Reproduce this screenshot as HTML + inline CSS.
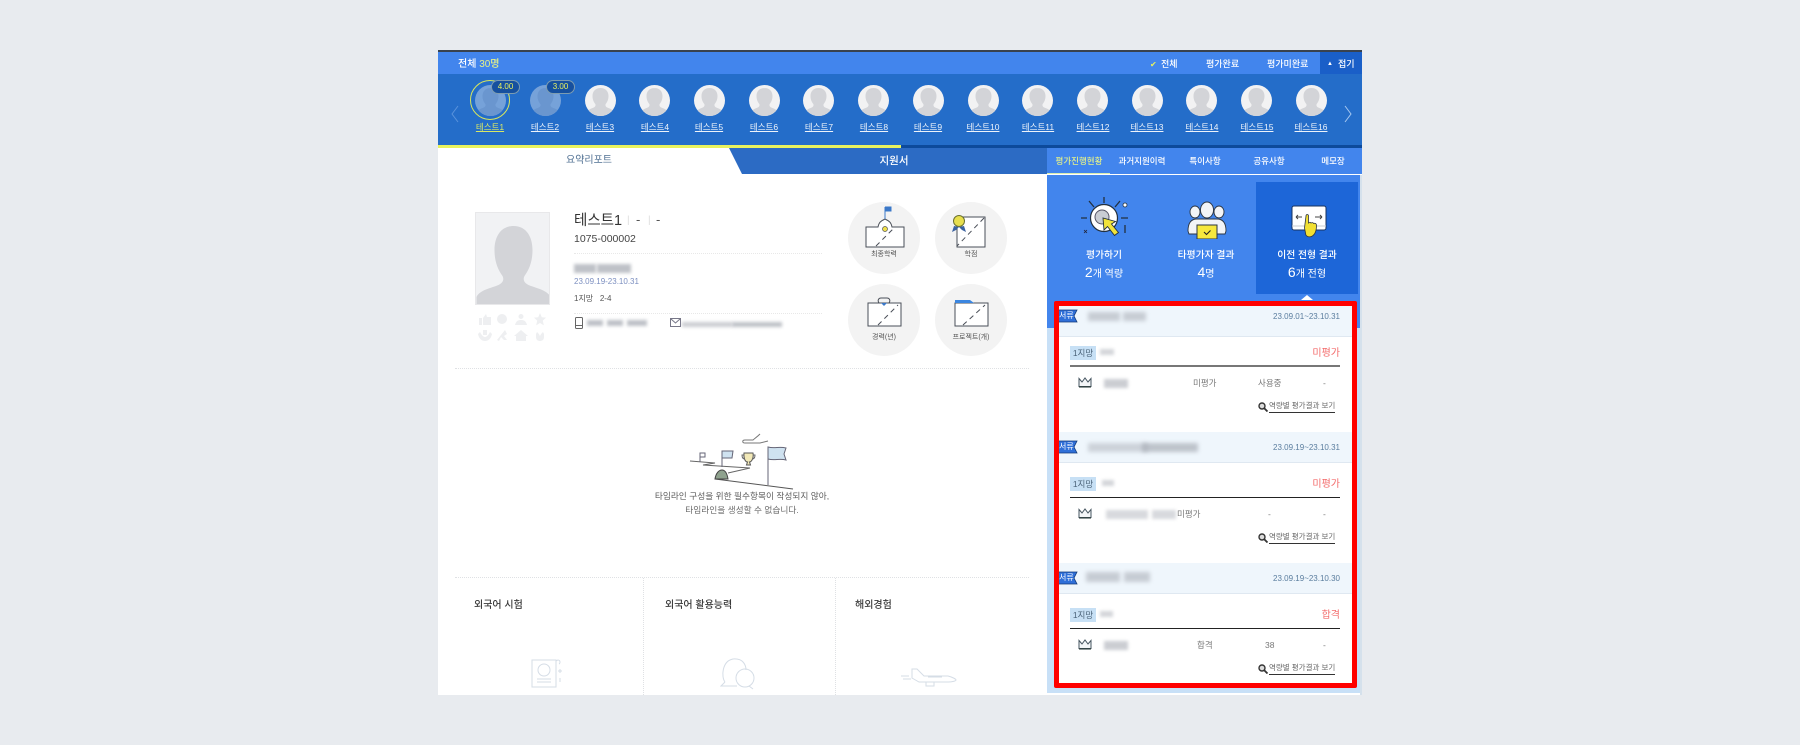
<!DOCTYPE html>
<html lang="ko"><head><meta charset="utf-8"><title>평가</title>
<style>
*{box-sizing:border-box}
html,body{margin:0;padding:0;width:1800px;height:745px;overflow:hidden;background:#e8ebef;font-family:"Liberation Sans","Noto Sans CJK KR",sans-serif;}
.a{position:absolute;white-space:nowrap}
.c{transform:translateX(-50%)}
.av{position:absolute;top:85px;width:31px;height:31px;border-radius:50%;background:#f2f2f3;overflow:hidden}
.av svg{display:block}
.nm{position:absolute;top:120px;width:54px;text-align:center;color:#fff;font-size:8.5px;line-height:14px;text-decoration:underline;opacity:.92}
.tb{position:absolute;top:153px;width:64px;text-align:center;color:#fff;font-size:8.5px;line-height:16px;font-weight:500}
.bl{position:absolute;background:#a9adb5;filter:blur(1.6px);opacity:.75}
.hd{position:absolute;left:1058px;width:295px;height:31px;background:#eff6fc;border-bottom:1px solid #dfe8f1}
.date{position:absolute;left:1240px;width:100px;text-align:right;color:#5a7d9e;font-size:8px;line-height:14px}
.lab{position:absolute;left:1070px;width:26px;height:14px;background:#c7e0f5;color:#4a6278;font-size:8.5px;line-height:14px;text-align:center}
.st{position:absolute;width:60px;left:1280px;text-align:right;font-size:10px;line-height:16px;color:#f36b6b}
.ln{position:absolute;left:1070px;width:270px;height:1px;background:#222}
.t9{position:absolute;font-size:8.5px;line-height:14px;color:#777}
.lk{position:absolute;left:1269px;width:66px;font-size:7.5px;line-height:13px;color:#666;border-bottom:1px solid #333;height:14px;text-align:center;white-space:nowrap}
.circ{position:absolute;width:72px;height:72px;border-radius:50%;background:#f3f3f3}
.cap{position:absolute;width:72px;text-align:center;font-size:7px;line-height:10px;color:#555}
.tt{position:absolute;color:#fff;font-size:9.8px;line-height:16px;text-align:center;width:100px;font-weight:500}
.tn{position:absolute;color:#fff;font-size:10px;line-height:18px;text-align:center;width:100px}
.tn b{font-weight:300;font-size:14px}
.ti{position:absolute;top:598px;color:#3a3a3a;font-size:10px;line-height:16px;font-weight:500}
.bd{position:absolute;left:1059px;color:#fff;font-size:8px;line-height:12px}
</style></head><body>
<svg width="0" height="0" style="position:absolute"><defs>
<symbol id="p" viewBox="0 0 31 31"><path d="M15.500 3c-5.200 0-8 3.500-8 8 0 3.500 1.200 6 2.800 8 .6 1.500 0 2.800-1.600 3.500-3 1.300-5 1.800-6 4L5 31h21l2.300-4.500c-1-2.200-3-2.700-6-4-1.600-.7-2.200-2-1.600-3.500 1.600-2 2.800-4.500 2.800-8 0-4.500-2.800-8-8-8z" fill="#d3d4d8"/></symbol>
<symbol id="cr" viewBox="0 0 14 11"><path d="M1 1.500l3 3.500 3-4 3 4 3-3.500v8H1z" fill="#f4f6f8" stroke="#465560" stroke-width="1"/><path d="M1 9.800h12" stroke="#344" stroke-width="1.500"/></symbol>
<symbol id="mg" viewBox="0 0 10 10"><circle cx="4" cy="4" r="3" fill="#ddd" stroke="#333" stroke-width="1.400"/><path d="M6 6l3.500 3.500" stroke="#333" stroke-width="1.800"/></symbol>
</defs></svg>

<div class="a" style="left:438px;top:50px;width:924px;height:645px;background:#fff;overflow:hidden"></div>
<div class="a" style="left:438px;top:50px;width:924px;height:2px;background:#39424e"></div>
<div class="a" style="left:438px;top:52px;width:924px;height:22px;background:#4285ed"></div>
<div class="a" style="left:438px;top:74px;width:924px;height:71px;background:#246dc9"></div>
<div class="a" style="left:438px;top:145px;width:463px;height:3px;background:#e8f25e"></div>
<div class="a" style="left:901px;top:145px;width:461px;height:3px;background:#0d4a9b"></div>
<div class="a" style="left:1320px;top:52px;width:42px;height:22px;background:#1a5fc8"></div>

<div class="a" style="left:458px;top:58px;color:#fff;font-size:10px;line-height:14px;font-weight:500">전체 <span style="color:#e3f08a">30명</span></div>
<div class="a" style="left:1150px;top:58px;color:#e8f25e;font-size:8px;line-height:13px">✔</div>
<div class="a" style="left:1161px;top:58px;color:#fff;font-size:9px;line-height:13px;font-weight:500">전체</div>
<div class="a" style="left:1206px;top:58px;color:#fff;font-size:9px;line-height:13px;font-weight:500">평가완료</div>
<div class="a" style="left:1267px;top:58px;color:#fff;font-size:9px;line-height:13px;font-weight:500">평가미완료</div>
<div class="a" style="left:1327px;top:58px;color:#fff;font-size:6px;line-height:12px">▲</div>
<div class="a" style="left:1338px;top:58px;color:#fff;font-size:9px;line-height:13px;font-weight:500">접기</div>

<svg class="a" style="left:450px;top:104px" width="10" height="20"><path d="M8 2L2 10l6 8" fill="none" stroke="#5a93dc" stroke-width="1"/></svg>
<svg class="a" style="left:1343px;top:104px" width="10" height="20"><path d="M2 2l6 8-6 8" fill="none" stroke="#a7c8f0" stroke-width="1"/></svg>

<div class="a" style="left:470px;top:80px;width:40px;height:40px;border-radius:50%;border:1.500px solid #d8e65c"></div>
<div class="av" style="left:475px;opacity:.4"><svg width="31" height="31"><use href="#p"/></svg></div>
<div class="av" style="left:530px;opacity:.4"><svg width="31" height="31"><use href="#p"/></svg></div>
<div class="av" style="left:585px"><svg width="31" height="31"><use href="#p"/></svg></div>
<div class="av" style="left:639px"><svg width="31" height="31"><use href="#p"/></svg></div>
<div class="av" style="left:694px"><svg width="31" height="31"><use href="#p"/></svg></div>
<div class="av" style="left:749px"><svg width="31" height="31"><use href="#p"/></svg></div>
<div class="av" style="left:803px"><svg width="31" height="31"><use href="#p"/></svg></div>
<div class="av" style="left:858px"><svg width="31" height="31"><use href="#p"/></svg></div>
<div class="av" style="left:913px"><svg width="31" height="31"><use href="#p"/></svg></div>
<div class="av" style="left:968px"><svg width="31" height="31"><use href="#p"/></svg></div>
<div class="av" style="left:1022px"><svg width="31" height="31"><use href="#p"/></svg></div>
<div class="av" style="left:1077px"><svg width="31" height="31"><use href="#p"/></svg></div>
<div class="av" style="left:1132px"><svg width="31" height="31"><use href="#p"/></svg></div>
<div class="av" style="left:1186px"><svg width="31" height="31"><use href="#p"/></svg></div>
<div class="av" style="left:1241px"><svg width="31" height="31"><use href="#p"/></svg></div>
<div class="av" style="left:1296px"><svg width="31" height="31"><use href="#p"/></svg></div>

<div class="a" style="left:491px;top:80px;width:29px;height:14px;border-radius:7px;background:#16509f;border:1px solid #7d9cb0;color:#e8f25e;font-size:8px;line-height:12px;text-align:center">4.00</div>
<div class="a" style="left:546px;top:80px;width:29px;height:14px;border-radius:7px;background:#16509f;border:1px solid #7d9cb0;color:#e8f25e;font-size:8px;line-height:12px;text-align:center">3.00</div>

<div class="nm" style="left:463px;color:#e8f25e">테스트1</div><div class="nm" style="left:518px">테스트2</div><div class="nm" style="left:573px">테스트3</div><div class="nm" style="left:628px">테스트4</div><div class="nm" style="left:682px">테스트5</div><div class="nm" style="left:737px">테스트6</div><div class="nm" style="left:792px">테스트7</div><div class="nm" style="left:847px">테스트8</div><div class="nm" style="left:901px">테스트9</div><div class="nm" style="left:956px">테스트10</div><div class="nm" style="left:1011px">테스트11</div><div class="nm" style="left:1066px">테스트12</div><div class="nm" style="left:1120px">테스트13</div><div class="nm" style="left:1175px">테스트14</div><div class="nm" style="left:1230px">테스트15</div><div class="nm" style="left:1284px">테스트16</div>

<svg class="a" style="left:729px;top:148px" width="318" height="26"><path d="M0 0H318V26H13z" fill="#2c6bc4"/></svg>
<div class="a c" style="left:589px;top:153px;color:#4f6f92;font-size:10px;line-height:16px">요약리포트</div>
<div class="a c" style="left:894px;top:153px;color:#fff;font-size:10.500px;line-height:16px;font-weight:500">지원서</div>

<div class="a" style="left:1047px;top:148px;width:315px;height:26px;background:#4285ed"></div>
<div class="tb" style="left:1047px;color:#e3f08a">평가진행현황</div><div class="tb" style="left:1110px">과거지원이력</div><div class="tb" style="left:1173px">특이사항</div><div class="tb" style="left:1237px">공유사항</div><div class="tb" style="left:1301px">메모장</div>
<div class="a" style="left:1047px;top:174px;width:315px;height:1px;background:#fff"></div>
<div class="a" style="left:1047px;top:173px;width:63px;height:1px;background:#d8ecb0"></div>

<div class="a" style="left:1047px;top:175px;width:313px;height:153px;background:#4285ed"></div>
<div class="a" style="left:1047px;top:328px;width:313px;height:365px;background:#c8e0f7"></div>
<div class="a" style="left:1360px;top:175px;width:2px;height:520px;background:#d5e1ec"></div>
<div class="a" style="left:1256px;top:182px;width:102px;height:112px;background:#1d66d8"></div>
<svg class="a" style="left:1300px;top:294px" width="14" height="7"><path d="M1 6l6-5 6 5z" fill="#fff"/></svg>

<svg class="a" style="left:1079px;top:197px" width="54" height="50" viewBox="0 0 54 50"><g fill="none" stroke="#22303f" stroke-width="1.300"><path d="M25 0v6M10 4l5 6M41 4l-5 6M2 21h6M42 21h7M46 28v8"/></g><circle cx="46" cy="8" r="2" fill="#fff" stroke="#22303f" stroke-width=".8"/><circle cx="25" cy="21" r="13.500" fill="#fff" stroke="#22303f" stroke-width="1.200"/><circle cx="23" cy="20" r="7" fill="#c9cdd3" stroke="#556" stroke-width="1"/><path d="M24 21l1 12 3.500-3.500 7 9 4-3-7-8.500 4-2.500z" fill="#f1e33b" stroke="#23303d" stroke-width=".9"/><path d="M5 33l3 3m0-3l-3 3" stroke="#223" stroke-width=".8"/></svg>
<svg class="a" style="left:1186px;top:201px" width="42" height="38" viewBox="0 0 42 38"><g fill="#f2f4f7" stroke="#2b3542" stroke-width=".9"><ellipse cx="9" cy="11" rx="5" ry="6"/><ellipse cx="33" cy="11" rx="5" ry="6"/><path d="M2 30c0-8 3-12 9-12h20c6 0 9 4 9 12l-1 3H3z"/><ellipse cx="21" cy="9" rx="6.500" ry="8"/></g><rect x="11" y="24" width="20" height="14" fill="#f6e83d" stroke="#2b3542"/><path d="M18 31l2.500 2.500 4-4" fill="none" stroke="#222" stroke-width="1.100"/></svg>
<svg class="a" style="left:1291px;top:205px" width="37" height="34" viewBox="0 0 37 34"><rect x="1" y="1" width="34" height="24" rx="2" fill="#fff" stroke="#18335e"/><path d="M1 21h34" stroke="#c8ccd2"/><path d="M5 12h6M5 12l2-2M5 12l2 2M24 12h7M31 12l-2-2M31 12l-2 2" stroke="#444" fill="none"/><path d="M15 11c0-2 2.500-2 2.500 0v7c1-1 2-1 2.500 0 1-.6 2-.6 2.500.4 1.500-.4 3 0 3 2 0 5-1 7-2 8.500-1.500 2-3 3-5 3-3 0-4-1.500-4-4l-1-5z" fill="#f2e032" stroke="#2d3440" stroke-width=".8"/></svg>

<div class="tt" style="left:1054px;top:248px">평가하기</div><div class="tn" style="left:1054px;top:263px"><b>2</b>개 역량</div>
<div class="tt" style="left:1156px;top:248px">타평가자 결과</div><div class="tn" style="left:1156px;top:263px"><b>4</b>명</div>
<div class="tt" style="left:1257px;top:248px">이전 전형 결과</div><div class="tn" style="left:1257px;top:263px"><b>6</b>개 전형</div>

<div class="a" style="left:1058px;top:306px;width:295px;height:378px;background:#fff"></div>

<!-- left profile -->
<div class="a" style="left:475px;top:212px;width:75px;height:93px;background:#f1f2f4;border:1px solid #e8e8ea;overflow:hidden"><svg width="75" height="92" viewBox="0 0 75 92"><path d="M37.500 13c-13 0-19 11-19 24 0 11 3 19 8 26 2 4 0 7-4 9-7 3-19 5-22 12v8h74v-8c-3-7-15-9-22-12-4-2-6-5-4-9 5-7 8-15 8-26 0-13-6-24-19-24z" fill="#d3d4d8"/></svg></div>
<svg class="a" style="left:477px;top:312px" width="70" height="32" viewBox="0 0 70 32"><g fill="#eeeff1"><path d="M2 6h3v7H2zM6 6l3-4 1 3h4v8H6z"/><circle cx="25" cy="7" r="5"/><path d="M44 2a2.500 2.500 0 110 5 2.500 2.500 0 010-5zM38 13c1-4 3-5 6-5s5 1 6 5z"/><path d="M63 1l1.800 4.200 4.200.4-3.200 3 1 4.800-3.800-2.400-3.800 2.400 1-4.800-3.200-3 4.200-.4z"/><path d="M3 20c2 4 4 5 5 5s3-1 5-5l2 2c-1 5-4 7-7 7s-6-2-7-7zM6 18h4v5H6z"/><path d="M20 28l8-10 2 4-3 2 3 4h-3l-3-3-2 4z"/><path d="M44 18l7 6h-2v5H39v-5h-2z"/><path d="M60 20c2 2 2 2 3 4 1-2 1-2 3-4l1 2v3c0 3-2 4-4 4s-4-1-4-4v-3z"/></g></svg>

<div class="a" style="left:574px;top:211px;color:#333;font-size:14.500px;line-height:20px">테스트1</div>
<div class="a" style="left:627px;top:212px;color:#ddd;font-size:10px;line-height:18px">|</div>
<div class="a" style="left:636px;top:211px;color:#555;font-size:13px;line-height:18px">-</div>
<div class="a" style="left:648px;top:212px;color:#ddd;font-size:10px;line-height:18px">|</div>
<div class="a" style="left:656px;top:211px;color:#555;font-size:13px;line-height:18px">-</div>
<div class="a" style="left:574px;top:231px;color:#444;font-size:10.500px;line-height:17px">1075-000002</div>
<div class="a" style="left:574px;top:253px;width:248px;border-top:1px dotted #e8e8e8"></div>
<div class="bl" style="left:574px;top:264px;width:22px;height:9px"></div><div class="bl" style="left:597px;top:264px;width:34px;height:9px"></div>
<div class="a" style="left:574px;top:275px;color:#7c8fc0;font-size:8px;line-height:14px">23.09.19-23.10.31</div>
<div class="a" style="left:574px;top:292px;color:#555;font-size:8px;line-height:13px">1지망&nbsp;&nbsp; 2-4</div>
<div class="a" style="left:574px;top:313px;width:248px;border-top:1px dotted #e8e8e8"></div>
<svg class="a" style="left:575px;top:317px" width="8" height="12"><rect x=".5" y=".5" width="7" height="11" rx="1" fill="none" stroke="#666"/><path d="M1 8.500h6" stroke="#666"/></svg>
<div class="bl" style="left:587px;top:320px;width:16px;height:6px"></div><div class="bl" style="left:607px;top:320px;width:16px;height:6px"></div><div class="bl" style="left:627px;top:320px;width:20px;height:6px"></div>
<svg class="a" style="left:670px;top:318px" width="11" height="9"><rect x=".5" y=".5" width="10" height="8" fill="none" stroke="#778"/><path d="M1 1l4.500 4L10 1" fill="none" stroke="#778"/></svg>
<div class="bl" style="left:682px;top:322px;width:50px;height:5px;opacity:.6"></div><div class="bl" style="left:732px;top:322px;width:50px;height:5px"></div>

<div class="circ" style="left:848px;top:202px"></div><div class="circ" style="left:935px;top:202px"></div><div class="circ" style="left:848px;top:284px"></div><div class="circ" style="left:935px;top:284px"></div>
<svg class="a" style="left:848px;top:202px" width="160" height="155" viewBox="0 0 160 155" fill="none"><g stroke="#4a4f58" stroke-width="1"><path d="M18 25v20h38V25H44c-1-5-3-6-7-8-4 2-6 3-7 8z" fill="#fff"/><path d="M109 15h28v30h-28z" fill="#fff"/><path d="M136 16l-27 28" stroke-dasharray="5 4"/><path d="M28 44l19-19" stroke-dasharray="5 4"/><path d="M20 101h33v23H20z" fill="#fff"/><path d="M31 101c-2-3 0-5 2-5h6c2 0 4 2 2 5"/><path d="M30 123l20-20" stroke-dasharray="5 4"/><path d="M107 101h33v23h-33z" fill="#fff"/><path d="M115 123l22-20" stroke-dasharray="5 4"/></g><path d="M37 17V5m0 0h6v4h-6" fill="#3b78c8" stroke="#3b78c8"/><circle cx="37" cy="27" r="2.500" fill="#f0e04a" stroke="#555" stroke-width=".7"/><path d="M106 24l-2 6 4-2 3-3M116 24l2 6-4-2-3-3" fill="#3b62a0"/><circle cx="111" cy="19" r="5.500" fill="#e8df4e" stroke="#6a7030"/><path d="M107 101v-3h15l4 3z" fill="#3b86e0"/><path d="M33 101l3 3 3-3z" fill="#3b78c8"/></svg>
<div class="cap" style="left:848px;top:250px">최종학력</div><div class="cap" style="left:935px;top:250px">학점</div><div class="cap" style="left:848px;top:333px">경력(년)</div><div class="cap" style="left:935px;top:333px">프로젝트(개)</div>

<div class="a" style="left:455px;top:368px;width:574px;border-top:1px dotted #dfe1e4"></div>

<svg class="a" style="left:688px;top:431px" width="110" height="62" viewBox="0 0 110 62" fill="none"><path d="M2 30l25 2-12 2 47 3" stroke="#666"/><path d="M27 48l78 10" stroke="#555"/><path d="M12 31v-9h5v4h-5" stroke="#667"/><path d="M34 36V20" stroke="#667"/><path d="M34 20h11l-1 7H34z" stroke="#667" fill="#cfe2f0"/><path d="M80 54V16" stroke="#667"/><path d="M80 16c7 2 11-1 18 1l-2 6 2 6c-7-2-11 1-18-1z" stroke="#667" fill="#cfe2f0"/><path d="M56 22h9c1 6-2 9-3.500 9l1 3h-4l1-3c-2 0-4-3-3.500-9z" stroke="#555" fill="#f2e9b8"/><path d="M56 24h-2c0 3 1 4 3 4M65 24h2c0 3-1 4-3 4" stroke="#666"/><path d="M27 48c1-6 4-9 7-9s5 3 6 9z" fill="#8fa28e" stroke="#444"/><path d="M40 42l22-5" stroke="#666"/><path d="M72 3c-3 3-6 5-7 6H57c-3 0-3 3 0 3h15l8-2" stroke="#777"/></svg>
<div class="a c" style="left:742px;top:489px;color:#5c5c5c;font-size:8.700px;line-height:14px;">타임라인 구성을 위한 필수항목이 작성되지 않아,</div>
<div class="a c" style="left:742px;top:503px;color:#6a6a6a;font-size:8.700px;line-height:14px">타임라인을 생성할 수 없습니다.</div>

<div class="a" style="left:455px;top:577px;width:574px;border-top:1px dotted #dfe1e4"></div>
<div class="a" style="left:643px;top:578px;height:117px;border-left:1px dotted #dfe1e4"></div>
<div class="a" style="left:835px;top:578px;height:117px;border-left:1px dotted #dfe1e4"></div>
<div class="ti" style="left:474px">외국어 시험</div><div class="ti" style="left:665px">외국어 활용능력</div><div class="ti" style="left:855px">해외경험</div>
<svg class="a" style="left:530px;top:657px" width="36" height="32" viewBox="0 0 36 32" fill="none" stroke="#d5dde6"><rect x="2" y="3" width="24" height="27"/><circle cx="14" cy="13" r="6"/><path d="M7 22h14M7 25h14M26 4c4-3 5 2 3 3M30 12v4M28 14h4M30 21v4"/></svg>
<svg class="a" style="left:720px;top:657px" width="36" height="34" viewBox="0 0 36 34" fill="none" stroke="#d5dde6"><path d="M5 25C1 20 2 4 13 2c10-1 13 6 13 11"/><circle cx="25" cy="21" r="9"/><path d="M5 25L1 29h16M29 29l4 3"/></svg>
<svg class="a" style="left:900px;top:667px" width="60" height="22" viewBox="0 0 60 22" fill="none" stroke="#d5dde6"><path d="M12 2h5l7 7h24c4 1 8 3 8 4s-4 2-8 2H19l-7-4z"/><path d="M1 9h8M3 12h8M34 15v4h-8v-4M28 10h14"/></svg>

<!-- list -->
<div class="hd" style="top:306px"></div><div class="hd" style="top:432px"></div><div class="hd" style="top:563px"></div>
<div class="a" style="left:1088px;top:312px;width:32px;height:9px;background:#b5bac2;filter:blur(2px);opacity:.7"></div><div class="a" style="left:1123px;top:312px;width:23px;height:9px;background:#b5bac2;filter:blur(2px);opacity:.7"></div>
<div class="a" style="left:1088px;top:443px;width:60px;height:9px;background:#b5bac2;filter:blur(2px);opacity:.6"></div><div class="a" style="left:1142px;top:443px;width:56px;height:9px;background:#a8adb6;filter:blur(2px);opacity:.7"></div>
<div class="a" style="left:1086px;top:572px;width:34px;height:10px;background:#b5bac2;filter:blur(2px);opacity:.7"></div><div class="a" style="left:1124px;top:572px;width:26px;height:10px;background:#b5bac2;filter:blur(2px);opacity:.7"></div>

<svg class="a" style="left:1054px;top:309px" width="24" height="14"><path d="M0 1h23l-3 6 3 6H0z" fill="#2f6fd8" stroke="#123a78" stroke-width=".8"/></svg>
<div class="bd" style="top:310px">서류</div>
<svg class="a" style="left:1054px;top:440px" width="24" height="14"><path d="M0 1h23l-3 6 3 6H0z" fill="#2f6fd8" stroke="#123a78" stroke-width=".8"/></svg>
<div class="bd" style="top:441px">서류</div>
<svg class="a" style="left:1054px;top:571px" width="24" height="14"><path d="M0 1h23l-3 6 3 6H0z" fill="#2f6fd8" stroke="#123a78" stroke-width=".8"/></svg>
<div class="bd" style="top:572px">서류</div>

<div class="date" style="top:310px">23.09.01~23.10.31</div>
<div class="date" style="top:441px">23.09.19~23.10.31</div>
<div class="date" style="top:572px">23.09.19~23.10.30</div>

<div class="lab" style="top:346px">1지망</div><div class="lab" style="top:477px">1지망</div><div class="lab" style="top:608px">1지망</div>
<div class="bl" style="left:1100px;top:349px;width:14px;height:6px;opacity:.5"></div><div class="bl" style="left:1102px;top:480px;width:12px;height:6px;opacity:.5"></div><div class="bl" style="left:1100px;top:611px;width:13px;height:6px;opacity:.5"></div>
<div class="st" style="top:346px">미평가</div><div class="st" style="top:477px">미평가</div><div class="st" style="top:608px">합격</div>
<div class="ln" style="top:365px;height:2px;background:#777"></div><div class="ln" style="top:497px"></div><div class="ln" style="top:628px"></div>

<svg class="a" style="left:1078px;top:377px" width="14" height="11"><use href="#cr"/></svg><svg class="a" style="left:1078px;top:508px" width="14" height="11"><use href="#cr"/></svg><svg class="a" style="left:1078px;top:639px" width="14" height="11"><use href="#cr"/></svg>
<div class="bl" style="left:1104px;top:379px;width:24px;height:9px;opacity:.6"></div>
<div class="bl" style="left:1106px;top:510px;width:42px;height:9px;opacity:.45"></div><div class="bl" style="left:1152px;top:510px;width:24px;height:9px;opacity:.45"></div>
<div class="bl" style="left:1104px;top:641px;width:24px;height:9px;opacity:.6"></div>

<div class="t9" style="left:1193px;top:376px">미평가</div><div class="t9" style="left:1258px;top:376px">사용중</div><div class="t9" style="left:1323px;top:376px">-</div>
<div class="t9" style="left:1177px;top:507px">미평가</div><div class="t9" style="left:1268px;top:507px">-</div><div class="t9" style="left:1323px;top:507px">-</div>
<div class="t9" style="left:1197px;top:638px">합격</div><div class="t9" style="left:1265px;top:638px">38</div><div class="t9" style="left:1323px;top:638px">-</div>

<svg class="a" style="left:1258px;top:402px" width="10" height="10"><use href="#mg"/></svg><svg class="a" style="left:1258px;top:533px" width="10" height="10"><use href="#mg"/></svg><svg class="a" style="left:1258px;top:664px" width="10" height="10"><use href="#mg"/></svg>
<div class="lk" style="top:399px">역량별 평가결과 보기</div><div class="lk" style="top:530px">역량별 평가결과 보기</div><div class="lk" style="top:661px">역량별 평가결과 보기</div>

<div class="a" style="left:1054px;top:301px;width:303px;height:387px;border:5px solid #f00;border-radius:2px"></div>
</body></html>
